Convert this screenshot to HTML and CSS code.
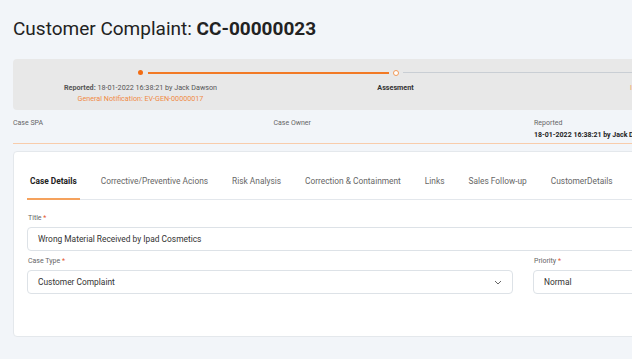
FILE: index.html
```html
<!DOCTYPE html>
<html lang="en">
<head>
<meta charset="utf-8">
<title>Customer Complaint</title>
<link rel="stylesheet" href="styles.css">
</head>
<body>
<div class="page">
  <h1 class="page-title">Customer Complaint: <strong>CC-00000023</strong></h1>

  <div class="progress">
    <div class="step done">
      <span class="dot"></span>
      <div class="step-label"><b>Reported:</b> 18-01-2022 16:38:21 by Jack Dawson</div>
      <div class="step-sub">General Notification: EV-GEN-00000017</div>
    </div>
    <div class="step current">
      <span class="dot"></span>
      <div class="step-label strong">Assesment</div>
    </div>
    <div class="step next">
      <span class="dot"></span>
      <div class="step-label accent">Investigation</div>
    </div>
    <div class="step last">
      <span class="dot"></span>
      <div class="step-label">Closure</div>
    </div>
  </div>

  <div class="info-row">
    <div class="info"><div class="info-label">Case SPA</div><div class="info-value"></div></div>
    <div class="info"><div class="info-label">Case Owner</div><div class="info-value"></div></div>
    <div class="info"><div class="info-label">Reported</div><div class="info-value">18-01-2022 16:38:21 by Jack Dawson</div></div>
    <div class="info"><div class="info-label">Status</div><div class="info-value">Assesment</div></div>
  </div>

  <div class="card">
    <nav class="tabs">
      <span class="tab active">Case Details</span>
      <span class="tab">Corrective/Preventive Acions</span>
      <span class="tab">Risk Analysis</span>
      <span class="tab">Correction &amp; Containment</span>
      <span class="tab">Links</span>
      <span class="tab">Sales Follow-up</span>
      <span class="tab">CustomerDetails</span>
    </nav>

    <div class="field">
      <label class="label">Title <span class="req">*</span></label>
      <div class="input">Wrong Material Received by Ipad Cosmetics</div>
    </div>

    <div class="field-row">
      <div class="field">
        <label class="label">Case Type <span class="req">*</span></label>
        <div class="input select">
          <span>Customer Complaint</span>
          <svg class="chev" width="8" height="5" viewBox="0 0 8 5"><path d="M1 1l3 3 3-3" fill="none" stroke="#666" stroke-width="1"/></svg>
        </div>
      </div>
      <div class="field">
        <label class="label">Priority <span class="req">*</span></label>
        <div class="input">Normal</div>
      </div>
    </div>
  </div>
</div>
</body>
</html>
```

FILE: styles.css
```css
* { box-sizing: border-box; }
html, body {
  margin: 0;
  padding: 0;
  background: #f2f5f9;
  overflow: hidden;
  width: 632px;
  height: 359px;
}
body {
  font-family: Roboto, "Noto Sans", sans-serif;
  color: #333;
}
.page {
  width: 1040px;
  padding: 0 0 0 13px;
}
.page-title {
  margin: 0;
  padding-top: 17px;
  height: 59px;
  font-size: 19px;
  font-weight: 400;
  color: #222;
  line-height: 24px;
}
.page-title strong { font-weight: 700; }

.progress {
  display: grid;
  grid-template-columns: repeat(4, 255px);
  height: 51px;
  background: #e8e8e8;
  border-radius: 4px;
  padding-top: 11px;
}
.step {
  position: relative;
  display: flex;
  flex-direction: column;
  align-items: center;
  font-size: 7.2px;
  color: #555;
}
.step .dot {
  width: 5px;
  height: 5px;
  border-radius: 50%;
  margin-bottom: 8px;
}
.step::after {
  content: "";
  position: absolute;
  top: 2px;
  left: calc(50% + 7px);
  width: calc(100% - 14px);
  height: 1px;
  background: #c9ced4;
}
.step.last::after { display: none; }
.step.done .dot { background: #f26c12; }
.step.done::after { background: #f27a25; height: 1.5px; }
.step.current .dot {
  width: 6px; height: 6px;
  margin-top: -0.5px;
  margin-bottom: 7.5px;
  border: 1px solid #f29a58;
  background: #fff;
}
.step.next .dot, .step.last .dot { background: #c9ced4; }
.step-label { line-height: 9px; white-space: nowrap; }
.step-label b { color: #555; font-weight: 700; }
.step-label.strong { font-weight: 700; color: #333; }
.step-label.accent { color: #f3a062; }
.step-sub { line-height: 9px; margin-top: 2px; color: #f08a45; white-space: nowrap; }

.info-row {
  display: grid;
  grid-template-columns: repeat(4, 260.5px);
  padding-top: 9px;
  height: 34px;
  border-bottom: 1px solid #f8ccab;
  font-size: 7px;
}
.info-label { color: #666; line-height: 9px; }
.info-value { color: #222; font-weight: 700; line-height: 9px; margin-top: 3px; white-space: nowrap; }

.card {
  margin-top: 7px;
  background: #fff;
  border: 1px solid #e4e8ec;
  border-radius: 4px;
  height: 186px;
  padding: 0 13px;
}
.tabs {
  display: flex;
  gap: 18px;
  padding-top: 24px;
  border-bottom: 1px solid #e3e7ec;
  font-size: 8.35px;
}
.tab {
  padding: 0 3px 11px;
  color: #666;
  line-height: 11px;
  white-space: nowrap;
  border-bottom: 2px solid transparent;
  margin-bottom: -1px;
}
.tab.active {
  color: #222;
  font-weight: 700;
  border-bottom-color: #f5a25d;
}
.field { display: flex; flex-direction: column; }
.card > .field { margin-top: 14px; }
.label {
  font-size: 7px;
  color: #666;
  line-height: 9px;
  margin-bottom: 4px;
  padding-left: 1px;
}
.req { color: #e4572e; }
.input {
  height: 24px;
  border: 1px solid #dde2e7;
  border-radius: 4px;
  padding: 0 10px;
  display: flex;
  align-items: center;
  font-size: 8.4px;
  color: #333;
  background: #fff;
}
.select { justify-content: space-between; }
.field-row {
  display: grid;
  grid-template-columns: 486px 486px;
  gap: 20px;
  margin-top: 6px;
}
```
